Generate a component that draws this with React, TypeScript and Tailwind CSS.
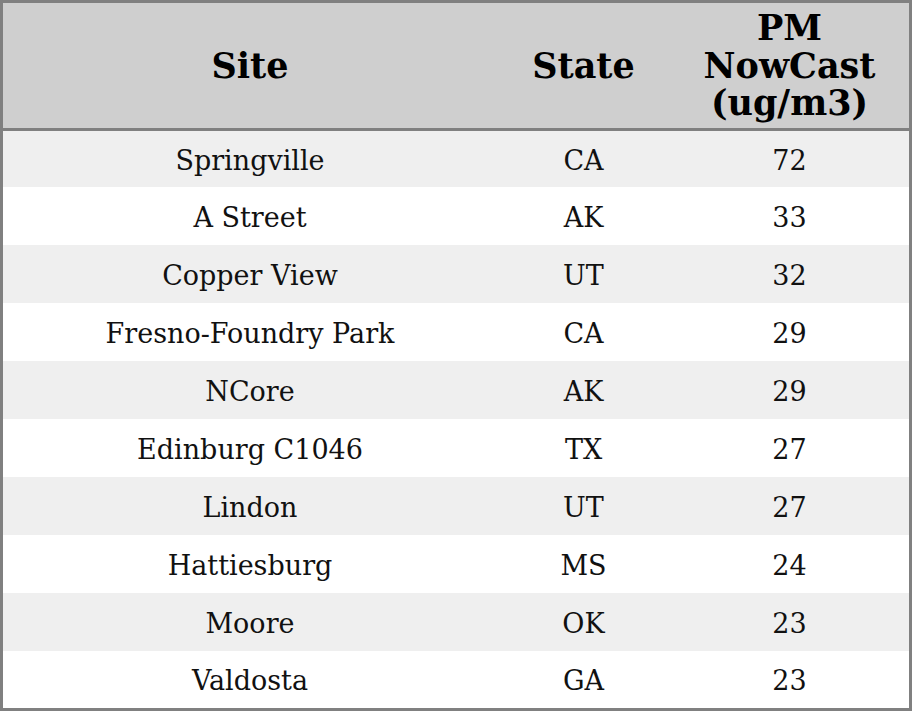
import React from "react";

const rows: [string, string, string][] = [
  ["Springville", "CA", "72"],
  ["A Street", "AK", "33"],
  ["Copper View", "UT", "32"],
  ["Fresno-Foundry Park", "CA", "29"],
  ["NCore", "AK", "29"],
  ["Edinburg C1046", "TX", "27"],
  ["Lindon", "UT", "27"],
  ["Hattiesburg", "MS", "24"],
  ["Moore", "OK", "23"],
  ["Valdosta", "GA", "23"],
];

export default function App() {
  return (
    <div className="w-[912px] h-[711px] bg-white" style={{ fontFamily: '"DejaVu Serif", serif' }}>
      <div className="w-full h-full border-[3px] border-[#808080] flex flex-col text-[#111]">
        <div className="h-[125px] shrink-0 bg-[#cfcfcf] border-b-[3px] border-[#808080] box-content flex items-center font-bold text-[35px] leading-[37.5px] text-center text-black">
          <div className="w-[494px]">Site</div>
          <div className="w-[173px]">State</div>
          <div className="flex-1">PM<br />NowCast<br />(ug/m3)</div>
        </div>
        <div className="flex-1 flex flex-col">
          {rows.map((r, i) => (
            <div
              key={i}
              className={`flex items-center pt-[4px] text-center text-[27px] ${i === 0 ? "h-[56px] shrink-0" : i === rows.length - 1 ? "flex-1" : "h-[58px] shrink-0"} ${i % 2 === 0 ? "bg-[#efefef]" : "bg-white"}`}
            >
              <div className="w-[494px]">{r[0]}</div>
              <div className="w-[173px]">{r[1]}</div>
              <div className="flex-1">{r[2]}</div>
            </div>
          ))}
        </div>
      </div>
    </div>
  );
}
